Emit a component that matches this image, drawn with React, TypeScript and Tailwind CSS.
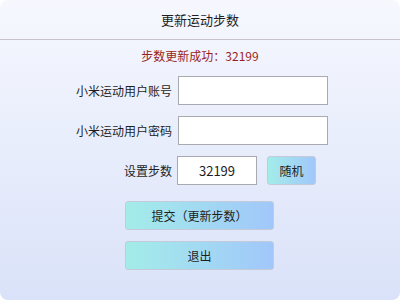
import { useState } from "react";

const font = { fontFamily: '"Noto Sans CJK SC", "Noto Sans", sans-serif' };

export default function App() {
  const [steps, setSteps] = useState("32199");

  return (
    <div className="w-[400px] h-[300px] bg-white" style={font}>
      <div className="flex h-full flex-col overflow-hidden rounded-[8px] bg-gradient-to-b from-[#f6f8fe] to-[#dae2f9] text-[#1e1e1e]">
        <div className="flex h-[40px] shrink-0 items-center justify-center border-b border-[#c8c2ca] text-[13px]">
          更新运动步数
        </div>
        <div className="mt-[8px] h-[16px] text-center text-[12px] leading-[16px] text-[#9a1f24]">
          步数更新成功：32199
        </div>
        <div className="mt-[12px] grid grid-cols-[172px_auto] items-center gap-x-[6px] gap-y-[11px] text-[12px]">
          <span className="text-right">小米运动用户账号</span>
          <input className="h-[29px] w-[150px] border border-[#a9a9b2] bg-white px-2 outline-none" />
          <span className="text-right">小米运动用户密码</span>
          <input type="password" className="h-[29px] w-[150px] border border-[#a9a9b2] bg-white px-2 outline-none" />
          <span className="text-right">设置步数</span>
          <div className="flex items-center">
            <input
              value={steps}
              onChange={(e) => setSteps(e.target.value)}
              className="-ml-px h-[29px] w-[80px] border border-[#a9a9b2] bg-white text-center text-[13px] outline-none"
            />
            <button
              onClick={() => setSteps(String(10000 + Math.floor(Math.random() * 30000)))}
              className="ml-[10px] h-[29px] w-[49px] rounded-[3px] border border-[#c3cad8] bg-gradient-to-r from-[#a3ece9] to-[#a1c7fa] text-[12px]"
            >
              随机
            </button>
          </div>
        </div>
        <div className="ml-[125px] mt-[16px] flex flex-col gap-[11px] text-[12px]">
          <button className="h-[29px] w-[149px] rounded-[3px] border border-[#c3cad8] bg-gradient-to-r from-[#a3ece9] to-[#a1c7fa]">
            提交（更新步数）
          </button>
          <button className="h-[29px] w-[149px] rounded-[3px] border border-[#c3cad8] bg-gradient-to-r from-[#a3ece9] to-[#a1c7fa]">
            退出
          </button>
        </div>
      </div>
    </div>
  );
}
